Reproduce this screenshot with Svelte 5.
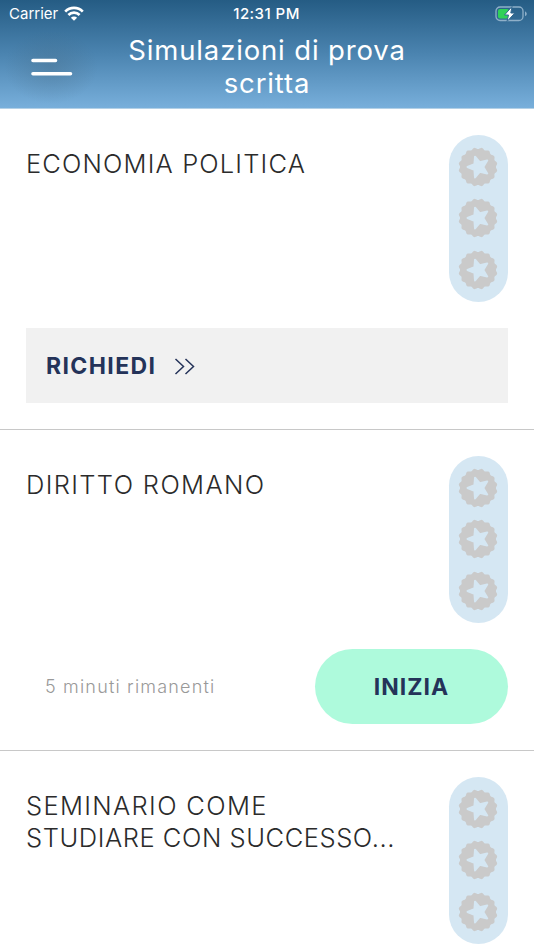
<script>
	const exams = [
		{ action: 'request', lines: [{ text: 'ECONOMIA POLITICA', spacing: 1.15 }] },
		{ action: 'start', lines: [{ text: 'DIRITTO ROMANO', spacing: 1.35 }] },
		{ action: null, lines: [
			{ text: 'SEMINARIO COME', spacing: 1.35 },
			{ text: 'STUDIARE CON SUCCESSO...', spacing: 0.56 },
		] },
	];

	const teeth = 16;
	let badge = '';
	for(let i=0; i<teeth*10; i++){
		const a = i / (teeth * 10) * Math.PI * 2;
		const r = 18.7 - 0.8 * Math.cos(a * teeth);
		badge += `${i ? 'L' : 'M'}${(20 + r * Math.sin(a)).toFixed(2)} ${(20 + r * Math.cos(a)).toFixed(2)}`;
	}
	badge += 'Z';
	let star = '';
	for(let i=0; i<10; i++){
		const a = Math.PI + i * Math.PI / 5;
		const r = i % 2 ? 4.9 : 10.9;
		star += `${i ? 'L' : 'M'}${(20.4 + r * Math.cos(a)).toFixed(2)} ${(20 + r * Math.sin(a)).toFixed(2)}`;
	}
	star += 'Z';
</script>

<style>
	:global(body) {
		margin: 0;
		background: #fff;
	}
	.screen {
		width: 534px;
		height: 950px;
		overflow: hidden;
		font-family: Inter, "Open Sans", sans-serif;
	}
	header {
		height: 109px;
		box-sizing: border-box;
		border-bottom: 1px solid #b3d0e6;
		background: linear-gradient(#255c84, #4b84b0 50%, #78afdb);
		color: #fff;
	}
	.status {
		display: grid;
		grid-template-columns: 1fr auto 1fr;
		align-items: center;
		height: 27px;
		padding: 0 7px 0 9px;
		font-size: 15px;
	}
	.carrier {
		display: flex;
		align-items: center;
		gap: 6px;
	}
	.time {
		margin-right: 3px;
		font-weight: 500;
		font-size: 15px;
		letter-spacing: 0.45px;
	}
	.battery {
		justify-self: end;
	}
	svg {
		display: block;
	}
	.nav {
		display: grid;
		grid-template-columns: 102px 330px 102px;
		height: 81px;
	}
	.menu {
		width: 102px;
		height: 80px;
		background: radial-gradient(ellipse at center, rgba(70, 105, 130, 0.35), transparent 65%);
	}
	h1 {
		margin: 7px 0 0;
		font-size: 27.5px;
		line-height: 33px;
		font-weight: 400;
		letter-spacing: 0.85px;
		text-align: center;
	}
	article {
		box-sizing: border-box;
		height: 321px;
		padding: 26px 26px 0;
		border-bottom: 1px solid #c8c8c8;
	}
	.top {
		display: flex;
		justify-content: space-between;
		height: 167px;
		margin-bottom: 26px;
	}
	h2 {
		margin: 13px 0 0;
		font-size: 25.5px;
		line-height: 32px;
		font-weight: 300;
		color: #2b2b2b;
	}
	h2 span {
		display: block;
		white-space: nowrap;
	}
	.badges {
		display: flex;
		flex-direction: column;
		gap: 11.7px;
		box-sizing: border-box;
		width: 59px;
		padding: 11.6px 0 0 9.3px;
		border-radius: 30px;
		background: #d5e7f3;
	}
	.request {
		display: flex;
		align-items: center;
		gap: 18px;
		height: 75px;
		padding-left: 20px;
		background: #f1f1f1;
		color: #243359;
		font-size: 23px;
		font-weight: 700;
		letter-spacing: 1.4px;
	}
	.start {
		display: flex;
		align-items: center;
		justify-content: space-between;
		padding-left: 19px;
		color: #999;
		font-size: 18px;
		font-weight: 300;
		letter-spacing: 1.18px;
	}
	button {
		width: 193px;
		height: 75px;
		padding: 0;
		border: 0;
		border-radius: 38px;
		background: #aefadc;
		color: #243359;
		font: 700 23px Inter, sans-serif;
		letter-spacing: 1px;
	}
</style>

<div class="screen">
	<header>
		<div class="status">
			<div class="carrier">
				<span>Carrier</span>
				<svg width="20" height="15" viewBox="0 0 20 15" fill="none" stroke="#fff" stroke-width="2.7">
					<path d="M1.2 5.6a12.4 12.4 0 0 1 17.6 0M4.4 9a7.9 7.9 0 0 1 11.2 0" />
					<path d="M10 14.8 6.9 11.7a4.4 4.4 0 0 1 6.2 0Z" fill="#fff" stroke="none" />
				</svg>
			</div>
			<div class="time">12:31 PM</div>
			<svg class="battery" width="32" height="16" viewBox="0 0 32 16">
				<rect x="1" y="1" width="27" height="13.5" rx="4" fill="none" stroke="#8fb0c9" stroke-width="1.3" />
				<path d="M30 5.3v5q1.8-1 1.8-2.5T30 5.3Z" fill="#8fb0c9" />
				<rect x="3" y="3" width="11" height="9.5" rx="2" fill="#30d158" />
				<path d="M17 0.5 9.5 9h4L12 15.5 19.8 7h-4Z" fill="#fff" stroke="#31678f" stroke-width="1" />
			</svg>
		</div>
		<div class="nav">
			<svg class="menu" viewBox="0 0 102 80" stroke="#fff" stroke-width="3.6" stroke-linecap="round">
				<path d="M33 33.5h22.5M33 46.7h37.5" />
			</svg>
			<h1>Simulazioni di prova<br>scritta</h1>
		</div>
	</header>

	{#each exams as { lines, action }}
		<article>
			<div class="top">
				<h2>
					{#each lines as { text, spacing }}
						<span style="letter-spacing: {spacing}px">{text}</span>
					{/each}
				</h2>
				<div class="badges">
					{#each [1, 2, 3] as n (n)}
						<svg width="40" height="40" viewBox="0 0 40 40">
							<path d={badge} fill="#cacaca" />
							<path d={star} fill="#d5e7f3" stroke="#d5e7f3" stroke-width="2" stroke-linejoin="round" />
						</svg>
					{/each}
				</div>
			</div>
			{#if action === 'request'}
				<div class="request">
					<span>RICHIEDI</span>
					<svg width="22" height="18" viewBox="0 0 22 18" fill="none" stroke="#243359" stroke-width="1.5">
						<path d="m1.5 2 8 7.5-8 7.5M11.5 2l8 7.5-8 7.5" />
					</svg>
				</div>
			{:else if action === 'start'}
				<div class="start">
					<span>5 minuti rimanenti</span>
					<button>INIZIA</button>
				</div>
			{/if}
		</article>
	{/each}
</div>
